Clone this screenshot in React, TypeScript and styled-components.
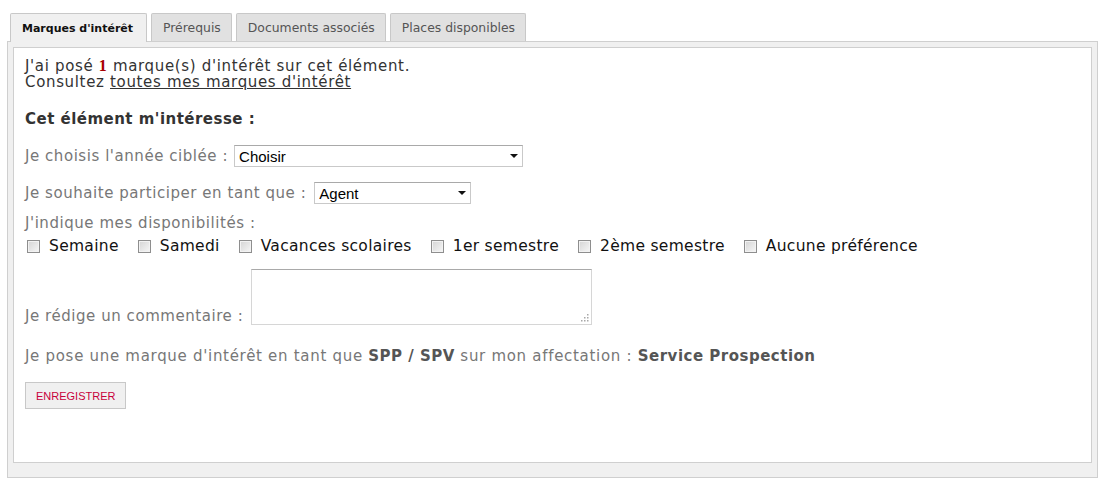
import React from 'react'
import styled, { createGlobalStyle, css } from 'styled-components'

const GlobalStyle = createGlobalStyle`
    html, body {
        margin: 0;
        padding: 0;
        background: #fff;
    }
    body {
        font-family: 'DejaVu Sans', Verdana, sans-serif;
    }
`

const TABS = ["Marques d'intérêt", 'Prérequis', 'Documents associés', 'Places disponibles']

const DISPOS = [
    'Semaine',
    'Samedi',
    'Vacances scolaires',
    '1er semestre',
    '2ème semestre',
    'Aucune préférence',
]

// petite poignée de redimensionnement en pointillés
function ResizeGrip() {
    const dots = [
        [6, 0],
        [6, 3],
        [3, 3],
        [6, 6],
        [3, 6],
        [0, 6],
    ]
    return (
        <Grip width="8" height="8" viewBox="0 0 8 8">
            {dots.map(([x, y], i) => (
                <rect key={i} x={x} y={y} width="1.5" height="1.5" fill="#a8a8a8" />
            ))}
        </Grip>
    )
}

function InteretTabs() {
    return (
        <>
            <GlobalStyle />
            <Page>
                <TabBar>
                    {TABS.map((t, i) => (
                        <Tab key={t} $active={i === 0}>
                            {t}
                        </Tab>
                    ))}
                </TabBar>
                <Panel>
                    <Content>
                        <Intro>
                            J'ai posé <Count>1</Count> marque(s) d'intérêt sur cet élément.
                            <br />
                            Consultez <IntroLink href="#">toutes mes marques d'intérêt</IntroLink>
                        </Intro>

                        <Heading>Cet élément m'intéresse :</Heading>

                        <FieldRow $mt={17}>
                            <Label>Je choisis l'année ciblée :</Label>
                            <SelectWrap $width={289}>
                                <Select defaultValue="choisir">
                                    <option value="choisir">Choisir</option>
                                </Select>
                            </SelectWrap>
                        </FieldRow>

                        <FieldRow $mt={15} $gap={8}>
                            <Label>Je souhaite participer en tant que :</Label>
                            <SelectWrap $width={157}>
                                <Select defaultValue="agent">
                                    <option value="agent">Agent</option>
                                </Select>
                            </SelectWrap>
                        </FieldRow>

                        <Label as="div" style={{ marginTop: 10 }}>
                            J'indique mes disponibilités :
                        </Label>
                        <CheckList>
                            {DISPOS.map((d) => (
                                <CheckItem key={d}>
                                    <Check type="checkbox" />
                                    {d}
                                </CheckItem>
                            ))}
                        </CheckList>

                        <CommentRow>
                            <Label>Je rédige un commentaire :</Label>
                            <CommentWrap>
                                <Comment />
                                <ResizeGrip />
                            </CommentWrap>
                        </CommentRow>

                        <Affectation>
                            Je pose une marque d'intérêt en tant que <strong>SPP / SPV</strong> sur
                            mon affectation : <strong>Service Prospection</strong>
                        </Affectation>

                        <SaveButton type="button">ENREGISTRER</SaveButton>
                    </Content>
                </Panel>
            </Page>
        </>
    )
}

export default InteretTabs

const Page = styled.div`
    padding: 13px 11px 8px 7px;
`

const TabBar = styled.div`
    display: flex;
    gap: 4px;
    padding-left: 3px;
    position: relative;
    z-index: 1;
`

const Tab = styled.div<{ $active?: boolean }>`
    height: 27px;
    padding: 0 10px 0 11px;
    display: flex;
    align-items: center;
    border: 1px solid #c8c8c8;
    border-bottom: none;
    border-radius: 2px 2px 0 0;
    font-size: 12.4px;
    color: #555;
    background: #e1e1e1;
    align-self: flex-end;
    ${({ $active }) =>
        $active &&
        css`
            height: 28px;
            margin-bottom: -1px;
            padding: 0 13px 0 11px;
            background: #f0f0f0;
            color: #111;
            font-size: 11px;
            font-weight: bold;
        `}
`

const Panel = styled.div`
    background: #f0f0f0;
    border: 1px solid #cfcfcf;
    padding: 5px 5px 14px 5px;
`

const Content = styled.div`
    background: #fff;
    border: 1px solid #cfcfcf;
    height: 416px;
    box-sizing: border-box;
    padding: 10px 11px 0 11px;
    font-size: 15px;
    letter-spacing: 0.55px;
    color: #777;
`

const Intro = styled.p`
    margin: 0;
    color: #333;
    line-height: 16px;
    letter-spacing: 0.66px;
`

const Count = styled.b`
    color: #a80000;
    font-family: 'Liberation Serif', serif;
    font-size: 16px;
`

const IntroLink = styled.a`
    color: #333;
    text-decoration: underline;
`

const Heading = styled.h3`
    margin: 20px 0 0;
    font-size: 15px;
    font-weight: bold;
    letter-spacing: 0.48px;
    color: #333;
    line-height: 18px;
`

const FieldRow = styled.div<{ $mt: number; $gap?: number }>`
    display: flex;
    align-items: center;
    gap: ${({ $gap }) => $gap ?? 6}px;
    margin-top: ${({ $mt }) => $mt}px;
`

const Label = styled.span`
    color: #777;
    line-height: 18px;
`

const SelectWrap = styled.span<{ $width: number }>`
    position: relative;
    display: inline-block;
    width: ${({ $width }) => $width}px;

    &::after {
        content: '';
        position: absolute;
        right: 5px;
        top: 9px;
        border-left: 4px solid transparent;
        border-right: 4px solid transparent;
        border-top: 4px solid #111;
        pointer-events: none;
    }
`

const Select = styled.select`
    appearance: none;
    width: 100%;
    height: 22px;
    box-sizing: border-box;
    border: 1px solid #c9c9c9;
    border-top-color: #a9a9a9;
    border-radius: 0;
    background: #fff;
    padding: 0 18px 0 4px;
    font-family: 'Liberation Sans', Arial, sans-serif;
    font-size: 15px;
    letter-spacing: 0;
    color: #000;
    outline: none;
`

const CheckList = styled.div`
    display: flex;
    gap: 19px;
    margin-top: 4px;
    padding-left: 2px;
`

const CheckItem = styled.label`
    display: flex;
    align-items: center;
    gap: 9px;
    color: #111;
    font-size: 15.5px;
    letter-spacing: 0.3px;
    line-height: 20px;
`

const Check = styled.input`
    appearance: none;
    margin: 0;
    width: 13px;
    height: 13px;
    box-sizing: border-box;
    border: 1px solid #8e8e8e;
    background: linear-gradient(135deg, #d4d4d4 0%, #f6f6f6 100%);
    box-shadow: inset 0 0 0 1px #f2f2f2;
`

const CommentRow = styled.div`
    display: flex;
    align-items: flex-end;
    gap: 8px;
    margin-top: 13px;
`

const CommentWrap = styled.span`
    position: relative;
    display: inline-block;
    line-height: 0;
`

const Comment = styled.textarea`
    width: 341px;
    height: 56px;
    box-sizing: border-box;
    margin: 0;
    border: 1px solid #d6d6d6;
    border-top-color: #a9a9a9;
    resize: none;
    font-family: inherit;
    outline: none;
`

const Grip = styled.svg`
    position: absolute;
    right: 3px;
    bottom: 3px;
    pointer-events: none;
`

const Affectation = styled.p`
    margin: 22px 0 0;
    color: #777;
    line-height: 18px;
    letter-spacing: 0.7px;

    strong {
        color: #555;
        letter-spacing: 0.5px;
    }
`

const SaveButton = styled.button`
    margin-top: 17px;
    height: 27px;
    padding: 0 10px;
    border: 1px solid #c8c8c8;
    background: #f0f0f0;
    color: #c8003c;
    font-family: 'Liberation Sans', Arial, sans-serif;
    font-size: 11px;
    cursor: pointer;
`
